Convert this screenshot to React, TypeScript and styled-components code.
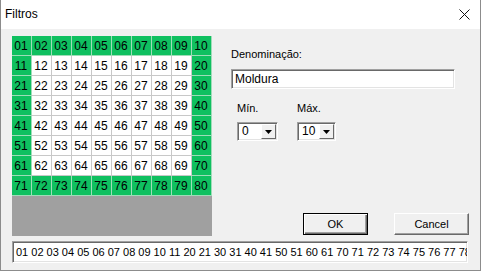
import React from 'react';
import styled, { createGlobalStyle } from 'styled-components';

const CELLS = Array.from({ length: 80 }, (_, i) => String(i + 1).padStart(2, '0'));

const isEdge = (i: number): boolean => {
  const row = Math.floor(i / 10);
  const col = i % 10;
  return row === 0 || row === 7 || col === 0 || col === 9;
};

const SELECTED = CELLS.filter((_, i) => isEdge(i)).join(' ');

const GlobalStyle = createGlobalStyle`
  html, body {
    margin: 0;
    padding: 0;
    width: 481px;
    height: 271px;
    overflow: hidden;
    background: #f0f0f0;
  }
  * { box-sizing: border-box; }
`;

const CloseIcon = () => (
  <svg width="11" height="11" viewBox="0 0 11 11">
    <path d="M0.5 0.5 L10.5 10.5 M10.5 0.5 L0.5 10.5" stroke="#111" strokeWidth="1" fill="none" />
  </svg>
);

const Arrow = () => (
  <svg width="7" height="4" viewBox="0 0 7 4">
    <path d="M0 0 H7 L3.5 4 Z" fill="#000" />
  </svg>
);

const App = (): React.JSX.Element => {
  return (
    <>
      <GlobalStyle />
      <Window>
        <TitleBar>
          <Title>Filtros</Title>
          <CloseButton>
            <CloseIcon />
          </CloseButton>
        </TitleBar>

        <Body>
          <TopRow>
            <LeftCol>
              <NumberGrid>
                {CELLS.map((n, i) => (
                  <Cell key={n} $on={isEdge(i)}>
                    {n}
                  </Cell>
                ))}
              </NumberGrid>
              <EmptyArea />
            </LeftCol>

            <RightCol>
              <Label>Denominação:</Label>
              <TextInput>Moldura</TextInput>

              <RangeRow>
                <RangeGroup>
                  <Label>Mín.</Label>
                  <Combo $width={41}>
                    <ComboText>0</ComboText>
                    <ComboButton>
                      <Arrow />
                    </ComboButton>
                  </Combo>
                </RangeGroup>
                <RangeGroup>
                  <Label>Máx.</Label>
                  <Combo $width={39}>
                    <ComboText>10</ComboText>
                    <ComboButton>
                      <Arrow />
                    </ComboButton>
                  </Combo>
                </RangeGroup>
              </RangeRow>

              <ButtonRow>
                <Button $default $width={65}>OK</Button>
                <Button $width={75}>Cancel</Button>
              </ButtonRow>
            </RightCol>
          </TopRow>

          <ListField>{SELECTED}</ListField>
        </Body>
      </Window>
    </>
  );
};

const Window = styled.div`
  width: 481px;
  height: 271px;
  display: flex;
  flex-direction: column;
  border: 1px solid #8c8c8c;
  border-top: none;
  background: #f0f0f0;
  font-family: 'Liberation Sans', Arial, sans-serif;
  color: #000;
`;

const TitleBar = styled.div`
  height: 29px;
  background: #fff;
  display: flex;
  align-items: center;
  justify-content: space-between;
  padding: 0 10px 2px 4px;
`;

const Title = styled.div`
  font-size: 12px;
`;

const CloseButton = styled.div`
  display: flex;
  align-items: center;
  margin-top: 1px;
`;

const Body = styled.div`
  flex: 1;
  display: flex;
  flex-direction: column;
  padding: 7px 11px 0 11px;
`;

const TopRow = styled.div`
  display: flex;
`;

const LeftCol = styled.div`
  width: 200px;
  display: flex;
  flex-direction: column;
`;

const NumberGrid = styled.div`
  display: grid;
  grid-template-columns: repeat(10, 20px);
  grid-auto-rows: 20px;
`;

const Cell = styled.div<{ $on: boolean }>`
  background: ${({ $on }) => ($on ? '#0fc060' : '#fff')};
  border-right: 1px solid ${({ $on }) => ($on ? '#9fdcb8' : '#c8c8c8')};
  border-bottom: 1px solid ${({ $on }) => ($on ? '#9fdcb8' : '#c8c8c8')};
  display: flex;
  align-items: center;
  justify-content: center;
  font-size: 12px;
  padding-right: 1px;
`;

const EmptyArea = styled.div`
  height: 40px;
  background: #a0a0a0;
`;

const RightCol = styled.div`
  width: 238px;
  margin-left: 19px;
  display: flex;
  flex-direction: column;
`;

const Label = styled.div`
  font-size: 11px;
  line-height: 13px;
  height: 13px;
  margin-top: 12px;
`;

const TextInput = styled.div`
  width: 224px;
  height: 20px;
  margin-top: 8px;
  background: #fff;
  border-top: 1px solid #a0a0a0;
  border-left: 1px solid #a0a0a0;
  border-right: 1px solid #fff;
  border-bottom: 1px solid #fff;
  box-shadow: inset 1px 1px 0 #696969, inset -1px -1px 0 #e3e3e3;
  font-size: 12px;
  line-height: 18px;
  padding-left: 3px;
`;

const RangeRow = styled.div`
  display: flex;
  gap: 19px;
  padding-left: 6px;
  margin-top: 1px;
`;

const RangeGroup = styled.div`
  display: flex;
  flex-direction: column;
  width: 41px;
`;

const Combo = styled.div<{ $width: number }>`
  width: ${({ $width }) => $width}px;
  height: 19px;
  margin-top: 7px;
  display: flex;
  background: #fff;
  border-top: 1px solid #a0a0a0;
  border-left: 1px solid #a0a0a0;
  border-right: 1px solid #fff;
  border-bottom: 1px solid #fff;
  box-shadow: inset 1px 1px 0 #696969, inset -1px -1px 0 #e3e3e3;
  padding: 1px 1px 1px 1px;
`;

const ComboText = styled.div`
  flex: 1;
  font-size: 12px;
  line-height: 15px;
  padding-left: 3px;
`;

const ComboButton = styled.div`
  width: 15px;
  display: flex;
  align-items: center;
  justify-content: center;
  background: #f0f0f0;
  border-top: 1px solid #fff;
  border-left: 1px solid #fff;
  border-right: 1px solid #696969;
  border-bottom: 1px solid #696969;
`;

const ButtonRow = styled.div`
  margin-top: auto;
  margin-bottom: 1px;
  display: flex;
  gap: 26px;
  padding-left: 72px;
`;

const Button = styled.div<{ $default?: boolean; $width: number }>`
  width: ${({ $width }) => $width}px;
  height: 22px;
  display: flex;
  align-items: center;
  justify-content: center;
  font-size: 11px;
  background: #f0f0f0;
  border: 1px solid ${({ $default }) => ($default ? '#000' : '#a0a0a0')};
  border-top-color: ${({ $default }) => ($default ? '#000' : '#fff')};
  border-left-color: ${({ $default }) => ($default ? '#000' : '#fff')};
  border-right-color: ${({ $default }) => ($default ? '#000' : '#696969')};
  border-bottom-color: ${({ $default }) => ($default ? '#000' : '#696969')};
  box-shadow: ${({ $default }) =>
    $default
      ? 'inset 1px 1px 0 #fff, inset -1px -1px 0 #696969, inset -2px -2px 0 #a0a0a0'
      : 'inset -1px -1px 0 #a0a0a0'};
`;

const ListField = styled.div`
  width: 456px;
  height: 22px;
  margin-top: 5px;
  background: #fff;
  border-top: 1px solid #a0a0a0;
  border-left: 1px solid #a0a0a0;
  border-right: 1px solid #fff;
  border-bottom: 1px solid #fff;
  box-shadow: inset 1px 1px 0 #696969, inset -1px -1px 0 #e3e3e3;
  font-size: 11px;
  line-height: 20px;
  padding-left: 3px;
  white-space: nowrap;
  overflow: hidden;
`;

export default App;
